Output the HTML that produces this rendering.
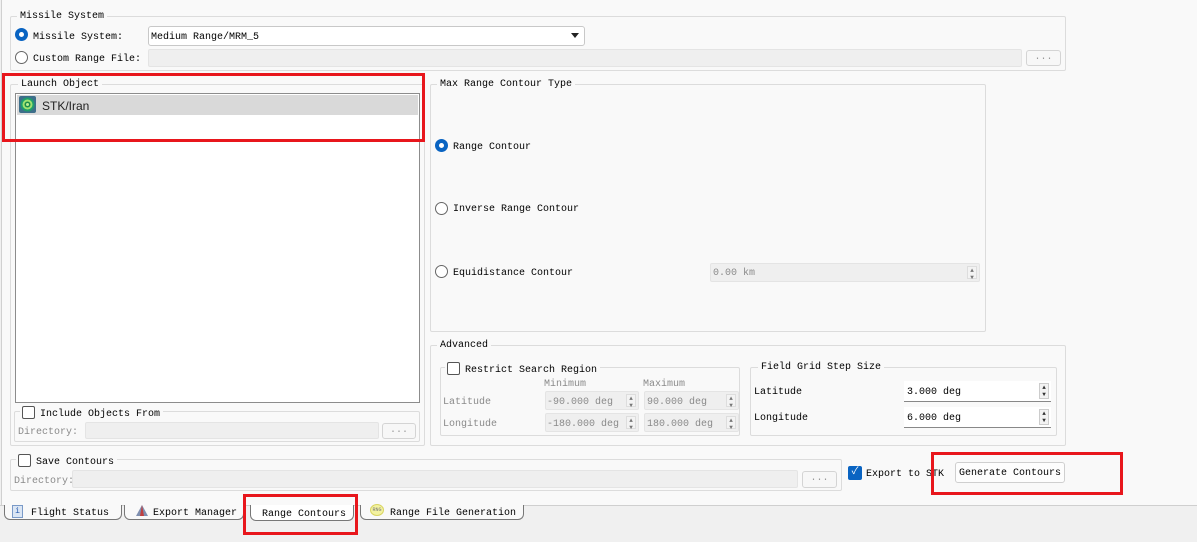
<!DOCTYPE html>
<html><head><meta charset="utf-8"><style>
*{box-sizing:border-box;margin:0;padding:0}
body{width:1197px;height:542px;background:#f0f0f0;font-family:"Liberation Mono","Noto Sans CJK SC",monospace;font-size:10px;color:#000;position:relative;overflow:hidden}
.a{position:absolute}
.panel{left:1px;top:0;width:1196px;height:506px;background:#f9f9f9;border-left:1px solid #d0d0d0;border-bottom:1px solid #d0d0d0}
.g{position:absolute;border:1px solid #dcdcdc;border-radius:2px}
.lbl{position:absolute;background:#f9f9f9;padding:0 3px;line-height:12px;white-space:nowrap;transform:translateY(1px)}
.t{position:absolute;white-space:nowrap;line-height:12px;transform:translateY(2px)}
.gray{color:#8a8a8a}
.inp{position:absolute;background:#efefef;border:1px solid #e4e4e4;border-radius:2px}
.btn{position:absolute;background:#f7f7f7;border:1px solid #d4d4d4;border-radius:3px;text-align:center;color:#999;line-height:14px}
.rad{position:absolute;width:13px;height:13px;border-radius:50%;border:1px solid #555;background:#fff}
.rad.on{border:4px solid #0a64c2;background:#fff}
.spin{position:absolute;right:2px;top:2px;width:10px;bottom:2px;border:1px solid #ccc;background:#f3f3f3;font-size:6px;line-height:7px;text-align:center;color:#777}
.red{position:absolute;border:3px solid #e8161c}
</style></head><body>
<div class="a panel"></div>

<div class="g" style="left:10px;top:16px;width:1056px;height:55px"></div>
<div class="lbl" style="left:17px;top:10px">Missile System</div>
<div class="rad on" style="left:15px;top:28px"></div>
<div class="t" style="left:33px;top:30px">Missile System:</div>
<div class="a" style="left:148px;top:26px;width:437px;height:20px;background:#fff;border:1px solid #c8c8c8;border-radius:3px"></div>
<div class="t" style="left:151px;top:30px">Medium Range/MRM_5</div>
<div class="a" style="left:571px;top:33px;border-left:4px solid transparent;border-right:4px solid transparent;border-top:5px solid #222"></div>
<div class="rad" style="left:15px;top:51px;border-color:#666"></div>
<div class="t" style="left:33px;top:52px">Custom Range File:</div>
<div class="inp" style="left:148px;top:49px;width:874px;height:18px"></div>
<div class="btn" style="left:1026px;top:50px;width:35px;height:16px">...</div>

<div class="g" style="left:10px;top:84px;width:415px;height:362px"></div>
<div class="lbl" style="left:18px;top:78px">Launch Object</div>
<div class="a" style="left:15px;top:93px;width:405px;height:310px;background:#fff;border:1px solid #8c8c8c"></div>
<div class="a" style="left:17px;top:95px;width:401px;height:20px;background:#d9d9d9"></div>
<svg class="a" style="left:19px;top:96px" width="17" height="17" viewBox="0 0 17 17"><rect x="0" y="0" width="17" height="17" rx="2" fill="#3d6e8a"/><circle cx="8.5" cy="8.5" r="7" fill="#1f9c6c"/><circle cx="8.5" cy="8.5" r="5" fill="#9ee26e"/><circle cx="8.5" cy="8.5" r="3" fill="#1c8a4a"/><circle cx="8.5" cy="8.5" r="1.5" fill="#bff08f"/></svg>
<div class="t" style="left:42px;top:97px;font-family:'Liberation Sans',sans-serif;font-size:12px;line-height:14px;color:#222">STK/Iran</div>
<div class="g" style="left:14px;top:411px;width:406px;height:31px"></div>
<div class="lbl" style="left:20px;top:405px;padding-left:2px"><span style="display:inline-block;width:13px;height:13px;border:1px solid #555;border-radius:2px;background:#fff;vertical-align:-3px;margin-right:5px"></span>Include Objects From</div>
<div class="t gray" style="left:18px;top:425px">Directory:</div>
<div class="inp" style="left:85px;top:422px;width:294px;height:17px"></div>
<div class="btn" style="left:382px;top:423px;width:34px;height:16px">...</div>

<div class="g" style="left:430px;top:84px;width:556px;height:248px"></div>
<div class="lbl" style="left:437px;top:78px">Max Range Contour Type</div>
<div class="rad on" style="left:435px;top:139px"></div>
<div class="t" style="left:453px;top:140px">Range Contour</div>
<div class="rad" style="left:435px;top:202px;border-color:#666"></div>
<div class="t" style="left:453px;top:202px">Inverse Range Contour</div>
<div class="rad" style="left:435px;top:265px;border-color:#666"></div>
<div class="t" style="left:453px;top:266px">Equidistance Contour</div>
<div class="inp" style="left:710px;top:263px;width:270px;height:19px"><div class="spin" style="border-color:#ddd">▲<br>▼</div></div>
<div class="t gray" style="left:713px;top:266px">0.00 km</div>

<div class="g" style="left:430px;top:345px;width:636px;height:101px"></div>
<div class="lbl" style="left:437px;top:339px">Advanced</div>
<div class="g" style="left:440px;top:367px;width:300px;height:69px"></div>
<div class="lbl" style="left:445px;top:361px;padding-left:2px"><span style="display:inline-block;width:13px;height:13px;border:1px solid #555;border-radius:2px;background:#fff;vertical-align:-3px;margin-right:5px"></span>Restrict Search Region</div>
<div class="t gray" style="left:544px;top:377px">Minimum</div>
<div class="t gray" style="left:643px;top:377px">Maximum</div>
<div class="t gray" style="left:443px;top:395px">Latitude</div>
<div class="t gray" style="left:443px;top:417px">Longitude</div>
<div class="inp" style="left:545px;top:391px;width:94px;height:19px"><div class="spin" style="border-color:#ddd">▲<br>▼</div></div>
<div class="inp" style="left:644px;top:391px;width:95px;height:19px"><div class="spin" style="border-color:#ddd">▲<br>▼</div></div>
<div class="inp" style="left:545px;top:413px;width:94px;height:19px"><div class="spin" style="border-color:#ddd">▲<br>▼</div></div>
<div class="inp" style="left:644px;top:413px;width:95px;height:19px"><div class="spin" style="border-color:#ddd">▲<br>▼</div></div>
<div class="t gray" style="left:547px;top:395px">-90.000 deg</div>
<div class="t gray" style="left:647px;top:395px">90.000 deg</div>
<div class="t gray" style="left:547px;top:417px">-180.000 deg</div>
<div class="t gray" style="left:647px;top:417px">180.000 deg</div>

<div class="g" style="left:750px;top:367px;width:307px;height:69px"></div>
<div class="lbl" style="left:758px;top:361px">Field Grid Step Size</div>
<div class="t" style="left:754px;top:385px">Latitude</div>
<div class="t" style="left:754px;top:411px">Longitude</div>
<div class="a" style="left:904px;top:381px;width:147px;height:21px;background:#fff;border-bottom:1px solid #888"><div class="spin" style="color:#333">▲<br>▼</div></div>
<div class="a" style="left:904px;top:407px;width:147px;height:21px;background:#fff;border-bottom:1px solid #888"><div class="spin" style="color:#333">▲<br>▼</div></div>
<div class="t" style="left:907px;top:385px">3.000 deg</div>
<div class="t" style="left:907px;top:411px">6.000 deg</div>

<div class="g" style="left:10px;top:459px;width:832px;height:32px"></div>
<div class="lbl" style="left:16px;top:453px;padding-left:2px"><span style="display:inline-block;width:13px;height:13px;border:1px solid #555;border-radius:2px;background:#fff;vertical-align:-3px;margin-right:5px"></span>Save Contours</div>
<div class="t gray" style="left:14px;top:474px">Directory:</div>
<div class="inp" style="left:72px;top:470px;width:726px;height:18px"></div>
<div class="btn" style="left:802px;top:471px;width:35px;height:17px">...</div>

<div class="a" style="left:848px;top:466px;width:14px;height:14px;background:#0a64c2;border-radius:2px;color:#fff;font-size:10px;line-height:14px;text-align:center">✓</div>
<div class="t" style="left:866px;top:467px">Export to STK</div>
<div class="a" style="left:955px;top:462px;width:110px;height:21px;background:#fdfdfd;border:1px solid #cfcfcf;border-radius:3px;text-align:center;line-height:21px">Generate Contours</div>

<div class="a" style="left:0;top:505px;width:1197px;height:1px;background:#cfcfcf"></div>
<div class="a" style="left:4px;top:505px;width:118px;height:15px;border:1px solid #777;border-top:none;border-radius:0 0 6px 6px;background:#f9f9f9"></div>
<div class="a" style="left:124px;top:505px;width:120px;height:15px;border:1px solid #777;border-top:none;border-radius:0 0 6px 6px;background:#f9f9f9"></div>
<div class="a" style="left:250px;top:505px;width:104px;height:16px;border:1px solid #777;border-top:none;border-radius:0 0 6px 6px;background:#fff"></div>
<div class="a" style="left:360px;top:505px;width:164px;height:15px;border:1px solid #777;border-top:none;border-radius:0 0 6px 6px;background:#f9f9f9"></div>
<div class="a" style="left:12px;top:505px;width:11px;height:13px;background:#dbe6f4;border:1px solid #7a9ac8;color:#2a5db0;font-size:8px;line-height:11px;text-align:center">i</div>
<div class="t" style="left:31px;top:506px">Flight Status</div>
<svg class="a" style="left:135px;top:505px" width="14" height="12"><path d="M7 0 L13 11 L1 11 Z" fill="#7f8fb0"/><path d="M7 0 L9 11 L5 11Z" fill="#c04040"/></svg>
<div class="t" style="left:153px;top:506px">Export Manager</div>
<div class="t" style="left:262px;top:507px">Range Contours</div>
<div class="a" style="left:370px;top:504px;width:14px;height:12px;border-radius:50%;background:#f3f2a0;border:1px solid #d8d460;font-size:5px;line-height:10px;text-align:center;color:#777">RNG</div>
<div class="t" style="left:390px;top:506px">Range File Generation</div>

<div class="red" style="left:2px;top:73px;width:423px;height:69px"></div>
<div class="red" style="left:931px;top:452px;width:192px;height:43px"></div>
<div class="red" style="left:243px;top:494px;width:115px;height:41px"></div>
</body></html>
